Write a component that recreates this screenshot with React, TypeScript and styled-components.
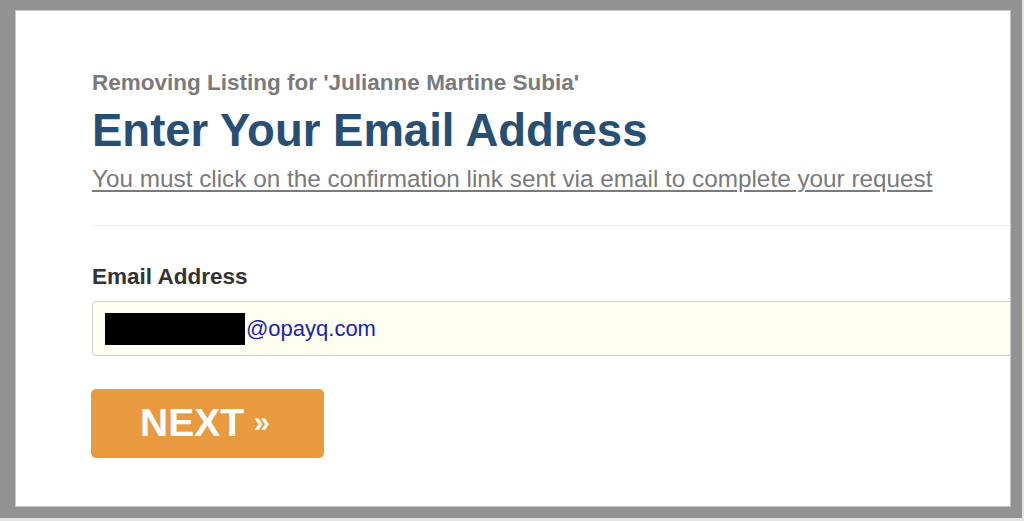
import React from 'react';
import styled, { createGlobalStyle } from 'styled-components';

const GlobalStyle = createGlobalStyle`
  html, body {
    margin: 0;
    padding: 0;
    background-color: #e4e4e4;
    font-family: "Liberation Sans", Arial, Helvetica, sans-serif;
  }
`;

const Page = styled.div`
  width: 1024px;
  height: 521px;
  overflow: hidden;
`;

const Frame = styled.div`
  box-sizing: border-box;
  width: 1022px;
  height: 518px;
  border-style: solid;
  border-color: #929292;
  border-width: 10px 11px 11px 15px;
`;

const Panel = styled.div`
  box-sizing: border-box;
  height: 100%;
  background-color: #ffffff;
  border: 1px solid #c8c8c8;
  overflow: hidden;
  padding: 60px 0 0 76px;
`;

const Content = styled.div`
  width: 980px;
`;

const Kicker = styled.div`
  font-size: 22.5px;
  line-height: 24px;
  font-weight: bold;
  color: #7a7a7a;
`;

const Title = styled.h1`
  margin: 11px 0 0;
  font-size: 45.5px;
  line-height: 50px;
  font-weight: bold;
  color: #264f73;
`;

const Notice = styled.a`
  display: inline-block;
  margin-top: 10px;
  font-size: 24.3px;
  line-height: 26px;
  color: #7a7a7a;
  text-decoration: underline;
  text-underline-offset: 3px;
`;

const Divider = styled.hr`
  margin: 33px 0 0;
  border: none;
  border-top: 1px solid #ececec;
`;

const Label = styled.label`
  display: block;
  margin-top: 39px;
  font-size: 22.5px;
  line-height: 24px;
  font-weight: bold;
  color: #333333;
`;

const InputBox = styled.div`
  box-sizing: border-box;
  display: flex;
  align-items: center;
  margin-top: 12px;
  height: 55px;
  padding-left: 12px;
  background-color: #fefff0;
  border: 1px solid #cfcfcf;
  border-radius: 4px;
  font-size: 22px;
  color: #1a22b4;
`;

const Redacted = styled.span`
  display: inline-block;
  width: 140px;
  height: 32px;
  margin-right: 1px;
  background-color: #000000;
`;

const NextButton = styled.button`
  box-sizing: border-box;
  margin-top: 33px;
  margin-left: -1px;
  width: 233px;
  height: 69px;
  padding: 0 0 2px 0;
  border: none;
  border-radius: 5px;
  background-color: #e99a3f;
  color: #ffffff;
  font-family: "Liberation Sans", Arial, Helvetica, sans-serif;
  font-size: 39px;
  font-weight: bold;
  text-align: left;
  text-indent: 49px;
`;

const Chevrons = styled.span`
  margin-left: -1px;
  font-size: 29px;
  vertical-align: 4px;
`;

const App: React.FC = () => {
  return (
    <>
      <GlobalStyle />
      <Page>
        <Frame>
          <Panel>
            <Content>
              <Kicker>Removing Listing for 'Julianne Martine Subia'</Kicker>
              <Title>Enter Your Email Address</Title>
              <Notice>You must click on the confirmation link sent via email to complete your request</Notice>
              <Divider />
              <Label>Email Address</Label>
              <InputBox>
                <Redacted />
                <span>@opayq.com</span>
              </InputBox>
              <NextButton>
                NEXT <Chevrons>»</Chevrons>
              </NextButton>
            </Content>
          </Panel>
        </Frame>
      </Page>
    </>
  );
};

export default App;
